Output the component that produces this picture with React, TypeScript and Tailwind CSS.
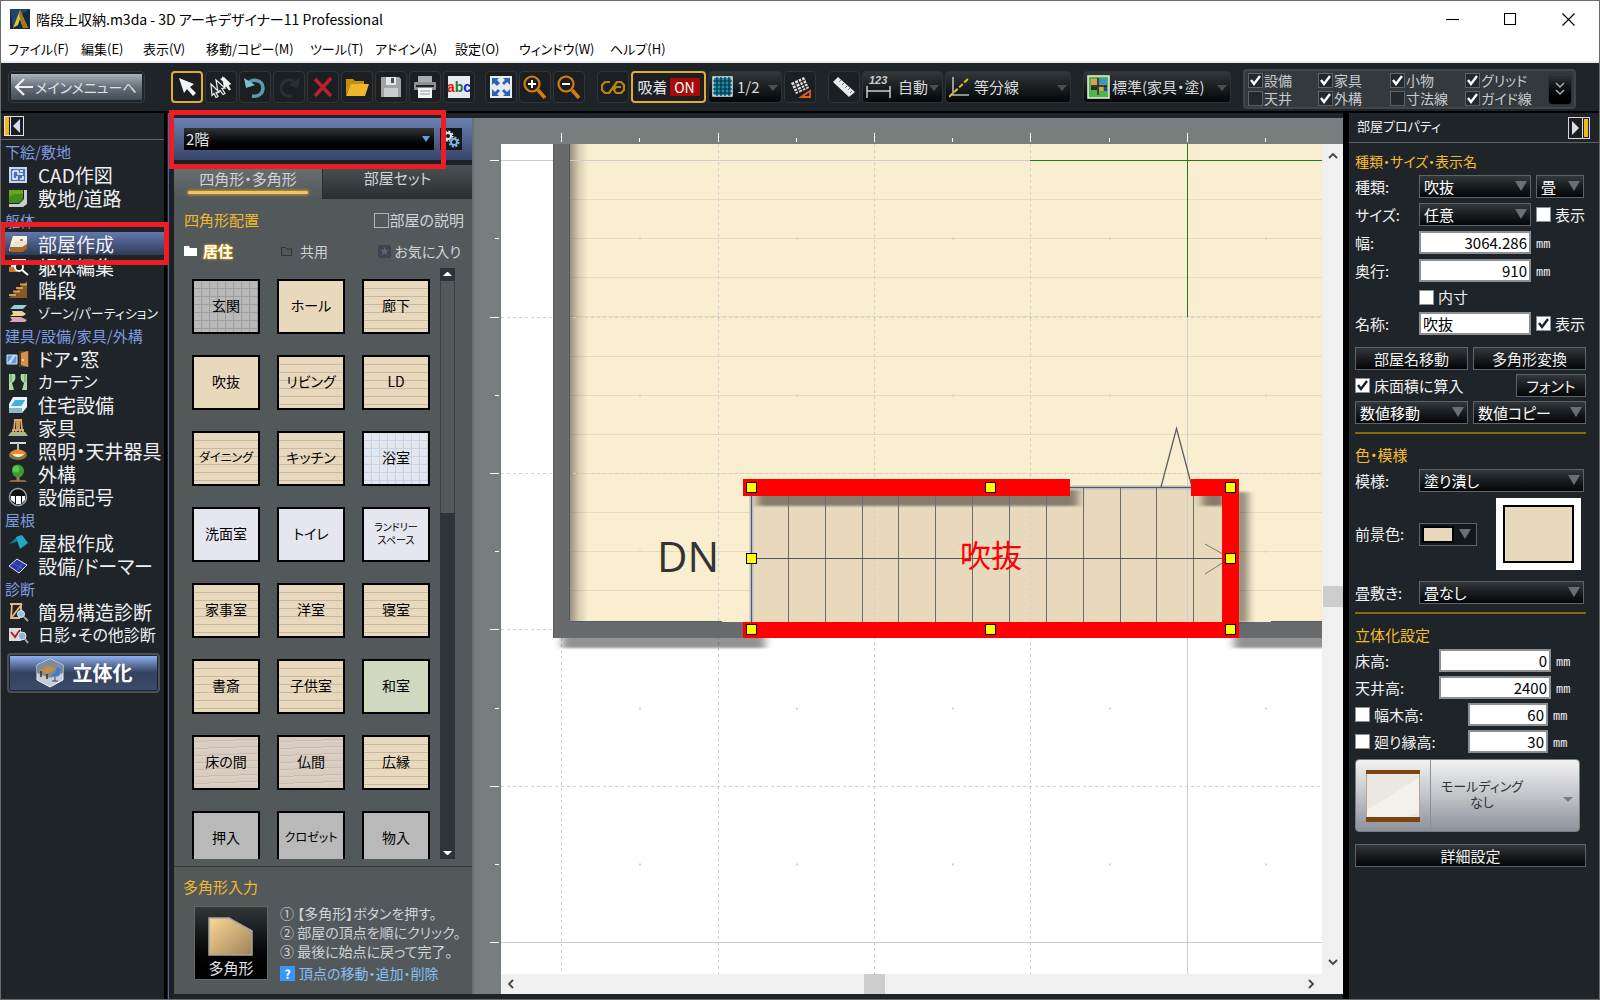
import React from "react";

type Room = { name: string; style: string; small?: boolean };

const PLAIN = "bg-[#e8d8bc]";
const WOOD =
  "bg-[repeating-linear-gradient(#e8d8bc_0_7px,#c6b8a4_7px_8px)]";
const GRAIN =
  "bg-[repeating-linear-gradient(178deg,#d8ccc0_0_4px,#c9bcae_4px_5px,#dccfc6_5px_7px)]";
const TILE_GRAY =
  "bg-[repeating-linear-gradient(90deg,transparent_0_7px,#9d9d9d_7px_8px),repeating-linear-gradient(#b9b9b9_0_7px,#9d9d9d_7px_8px)]";
const TILE_BLUE =
  "bg-[repeating-linear-gradient(90deg,transparent_0_7px,#c3d5e4_7px_8px),repeating-linear-gradient(#e6e6f0_0_7px,#c3d5e4_7px_8px)]";
const WHITE = "bg-[#e6e6f0]";
const GREEN = "bg-[#d0d8c0]";
const GRAY = "bg-[#b9b9b9]";

const rooms: Room[] = [
  { name: "玄関", style: TILE_GRAY },
  { name: "ホール", style: PLAIN },
  { name: "廊下", style: WOOD },
  { name: "吹抜", style: PLAIN },
  { name: "リビング", style: WOOD },
  { name: "LD", style: WOOD },
  { name: "ダイニング", style: WOOD },
  { name: "キッチン", style: WOOD },
  { name: "浴室", style: TILE_BLUE },
  { name: "洗面室", style: WHITE },
  { name: "トイレ", style: WHITE },
  { name: "ランドリー\nスペース", style: WHITE, small: true },
  { name: "家事室", style: WOOD },
  { name: "洋室", style: WOOD },
  { name: "寝室", style: WOOD },
  { name: "書斎", style: WOOD },
  { name: "子供室", style: WOOD },
  { name: "和室", style: GREEN },
  { name: "床の間", style: GRAIN },
  { name: "仏間", style: GRAIN },
  { name: "広縁", style: WOOD },
  { name: "押入", style: GRAY },
  { name: "クロゼット", style: GRAY },
  { name: "物入", style: GRAY },
];

const menus = [
  "ファイル(F)",
  "編集(E)",
  "表示(V)",
  "移動/コピー(M)",
  "ツール(T)",
  "アドイン(A)",
  "設定(O)",
  "ウィンドウ(W)",
  "ヘルプ(H)",
];

const sideIcons: Record<string, React.ReactNode> = {
  cad: (
    <>
      <rect x="1" y="2" width="18" height="16" fill="#c9d8f2" />
      <rect x="3" y="4" width="14" height="12" fill="#4a6fb8" />
      <path d="M5 6h5v3h5M5 6v8h4v-3M12 14h3v-3M12 6h3" fill="none" stroke="#fff" strokeWidth="1.4" />
    </>
  ),
  site: (
    <>
      <path d="M1 2h14v9l-4 4H1z" fill="#3f8f14" />
      <path d="M1 2h14v4H6L1 9z" fill="#6aa51f" />
      <path d="M16 2h3v14l-4 3H1v-3h10l5-5z" fill="#c9ccce" />
    </>
  ),
  room: (
    <>
      <path d="M5 2h14v12l-4 3H1l2-9z" fill="#efe4d2" />
      <path d="M5 2h14v5H8L3 11z" fill="#f8f1e4" />
      <path d="M2 13h12l5-3v4l-4 4H2z" fill="#a5672a" />
      <rect x="12" y="5" width="3" height="2" fill="#8a8f94" />
    </>
  ),
  body: (
    <>
      <path d="M4 2h14v6H9l-7 6z" fill="#efe4d2" />
      <path d="M1 10h8v5H1z" fill="#c9782a" />
      <circle cx="11" cy="10" r="4" fill="#222" stroke="#fff" strokeWidth="1.8" />
      <path d="M14 13l6 5" stroke="#fff" strokeWidth="2" />
    </>
  ),
  stairs: (
    <>
      <path d="M1 18L19 1v17z" fill="#8a5826" />
      <path d="M1 15h7M5 11.500h7M8 8h7M12 4.500h7" stroke="#d59a52" strokeWidth="1.800" />
    </>
  ),
  zone: (
    <>
      <path d="M6 2h13l-4 4H2z" fill="#8fd0d2" />
      <path d="M4 8h10l4 3-3 2H2l3-2z" fill="#e9d59a" />
      <path d="M2 14h11l6 3-2 2H1l3-2z" fill="#d9a3b4" />
    </>
  ),
  door: (
    <>
      <path d="M-1 6h10v9H-1z" fill="#5f9be0" stroke="#d9e8f8" />
      <path d="M0 14l5-8h3L3 14z" fill="#c4defa" />
      <rect x="11" y="2" width="10" height="16" fill="#5b3a1c" />
      <path d="M13 4l7-2v16l-7-2z" fill="#d8914c" />
      <circle cx="15" cy="11" r="1" fill="#fff" />
    </>
  ),
  curtain: (
    <>
      <path d="M1 2h6c1 5 0 7-3 9l2 7H1z" fill="#a7d9a0" />
      <path d="M19 2h-6c-1 5 0 7 3 9l-2 7h5z" fill="#a7d9a0" />
      <path d="M3 2v8M17 2v8" stroke="#5d9a5a" />
    </>
  ),
  bath: (
    <>
      <path d="M5 2h14v10l-5 6H1V9z" fill="#e9f3f8" />
      <path d="M7 5h11l-4 6H3z" fill="#3db3dc" />
      <path d="M1 13h13v5H1z" fill="#8db7cc" />
      <path d="M14 11l5-8" stroke="#fff" />
    </>
  ),
  chair: (
    <>
      <path d="M3 14h14l3 4H0z" fill="#9fb89a" />
      <path d="M6 2h8M7 2L6 11M13 2l1 9M9 3v8M11 3v8M4 12h12M5 12v5M15 12v5M8 12v3M12 12v3" fill="none" stroke="#dba562" strokeWidth="1.800" />
    </>
  ),
  light: (
    <>
      <path d="M2 2h16" stroke="#d8d8d8" strokeWidth="2" />
      <path d="M10 2v7" stroke="#bbb" strokeWidth="2" />
      <ellipse cx="10" cy="14" rx="9" ry="5" fill="#f7c14d" opacity=".5" />
      <path d="M2 13c2-6 14-6 16 0z" fill="#e98b3b" />
      <path d="M4 13h12c-2 4-10 4-12 0z" fill="#fff1b8" />
    </>
  ),
  tree: (
    <>
      <path d="M3 16h14l2 2H1z" fill="#8a6b4a" />
      <path d="M10 17V9" stroke="#b47a3e" strokeWidth="3" />
      <ellipse cx="10" cy="7" rx="6" ry="6.500" fill="#3f9b31" />
      <circle cx="8" cy="5" r="3.500" fill="#5fc24a" />
    </>
  ),
  symbol: (
    <>
      <circle cx="10" cy="10" r="8.500" fill="#111" stroke="#9da1a4" strokeWidth="1.500" />
      <path d="M3 9h14v4l-3 3V9h-1v8H8V9H7v7l-4-3z" fill="#fff" />
    </>
  ),
  roof: (
    <>
      <path d="M1 11l8-7 5-2-6 7z" fill="#0f7f95" />
      <path d="M8 4l6-2 6 8-8 6z" fill="#21a9c4" />
    </>
  ),
  solar: (
    <>
      <path d="M1 10l8-7 10 6-8 8z" fill="#2f38a0" stroke="#dfe4ff" />
      <path d="M5 7l10 6M9 14l6-7" stroke="#6a74d8" strokeWidth=".6" />
    </>
  ),
  structure: (
    <>
      <path d="M2 2h12M4 2l-1 14h9M14 2L4 15M13 3v7" fill="none" stroke="#e2bb7c" strokeWidth="1.8" />
      <circle cx="13" cy="12" r="3.500" fill="#8fc1e8" stroke="#dfeefa" />
      <path d="M16 15l4 4" stroke="#9aa" strokeWidth="2" />
    </>
  ),
  shadow: (
    <>
      <rect x="1" y="3" width="12" height="13" fill="#ddd" />
      <path d="M3 7l4 5 5-7" fill="none" stroke="#b5202b" strokeWidth="2" />
      <circle cx="14" cy="11" r="4" fill="#8fb7dc" stroke="#dfeefa" />
      <path d="M17 14l3 4" stroke="#9aa" strokeWidth="2" />
    </>
  ),
};

type SideRow = { label: string; icon?: string; active?: boolean; size?: string };

const sideRows: SideRow[] = [
  { label: "下絵/敷地" },
  { label: "CAD作図", icon: "cad" },
  { label: "敷地/道路", icon: "site" },
  { label: "躯体" },
  { label: "部屋作成", icon: "room", active: true },
  { label: "躯体編集", icon: "body" },
  { label: "階段", icon: "stairs" },
  { label: "ゾーン/パーティション", icon: "zone", size: "text-[13px]" },
  { label: "建具/設備/家具/外構" },
  { label: "ドア・窓", icon: "door" },
  { label: "カーテン", icon: "curtain", size: "text-base" },
  { label: "住宅設備", icon: "bath" },
  { label: "家具", icon: "chair" },
  { label: "照明・天井器具", icon: "light" },
  { label: "外構", icon: "tree" },
  { label: "設備記号", icon: "symbol" },
  { label: "屋根" },
  { label: "屋根作成", icon: "roof" },
  { label: "設備/ドーマー", icon: "solar" },
  { label: "診断" },
  { label: "簡易構造診断", icon: "structure" },
  { label: "日影・その他診断", icon: "shadow", size: "text-base" },
];

const TOOL =
  "flex h-8 shrink-0 items-center justify-center rounded-sm border border-[#2f3539] bg-[#1b1f22]";
const DROP =
  "h-8 w-full appearance-none rounded-sm border border-[#2c3134] bg-linear-to-b from-[#33383b] to-[#060708] text-[15px] text-[#d6d9db]";

const Tool = ({ label, active, children }: { label: string; active?: boolean; children: React.ReactNode }) => (
  <button aria-label={label} className={`${TOOL} w-8 ${active ? "border-2 !border-[#e0ac34]" : ""}`}>
    <svg width="24" height="24" viewBox="0 0 24 24" fill="none">
      {children}
    </svg>
  </button>
);

const ToolSelect = ({ label, value, width, pad, children }: { label: string; value: string; width: string; pad: string; children: React.ReactNode }) => (
  <div className={`relative shrink-0 ${width}`}>
    <select aria-label={label} className={`${DROP} ${pad}`}>
      <option>{value}</option>
    </select>
    <svg className="pointer-events-none absolute top-1 left-1" width="28" height="24" viewBox="0 0 28 24" fill="none">
      {children}
    </svg>
    <svg className="pointer-events-none absolute top-3.5 right-1" width="10" height="6">
      <path d="M0 0h10L5 6z" fill="#4a4f53" />
    </svg>
  </div>
);

const Check = ({ label, checked, dark }: { label: string; checked?: boolean; dark?: boolean }) => (
  <label className="flex items-center gap-1 whitespace-nowrap">
    <span className="relative block size-[15px]">
      <input
        type="checkbox"
        defaultChecked={checked}
        className={`peer block size-[15px] appearance-none border ${dark ? "border-[#5d6367] bg-[#23282c]" : "border-[#8c9093] bg-white"}`}
      />
      <svg className="pointer-events-none absolute top-0 left-0 hidden peer-checked:block" width="15" height="15">
        <path d="M3 7l3 4 6-8" fill="none" stroke={dark ? "#fff" : "#14202c"} strokeWidth="2.400" />
      </svg>
    </span>
    {label}
  </label>
);

const PropSelect = ({ id, value, width }: { id: string; value: string; width: string }) => (
  <div className={`relative ${width}`}>
    <select
      id={id}
      aria-label={id}
      className="block h-[23px] w-full appearance-none border border-[#5d6367] bg-linear-to-b from-[#33383b] to-[#050607] pl-1 text-[15px] leading-[20px] text-white"
    >
      <option>{value}</option>
    </select>
    <svg className="pointer-events-none absolute top-1.5 right-1" width="12" height="10">
      <path d="M0 0h12L6 10z" fill="#6a6f73" />
    </svg>
  </div>
);

const PropInput = ({ id, value, width, left }: { id: string; value: string; width: string; left?: boolean }) => (
  <input
    id={id}
    defaultValue={value}
    className={`block h-[23px] border-2 border-[#8c9093] bg-white px-0.5 text-[15px] leading-[19px] text-black ${width} ${left ? "" : "text-right"}`}
  />
);

const PROP_BUTTON =
  "h-[23px] border border-[#5d6367] bg-linear-to-b from-[#33383b] to-[#050607] text-[15px] leading-[20px]";

const Unit = () => <span className="pt-1 font-['Liberation_Mono'] text-xs">mm</span>;

const GoldLine = () => <div className="h-[2px] bg-[#8a6a08]" />;

const TitleBar = () => (
  <header className="bg-white text-black">
    <div className="flex h-9 items-center pl-[9px]">
      <svg width="20" height="20" viewBox="0 0 20 20">
        <rect width="20" height="20" fill="#16283f" />
        <path d="M0 0h20L9 7 3 18z" fill="#1f456e" />
        <path d="M10 1l8 18h-5l-3-9-2 6-5 3z" fill="#e2bf45" />
        <path d="M10 1l8 18h-5L9 6z" fill="#a17a16" />
      </svg>
      <h1 className="ml-1.5 flex-1 text-sm">階段上収納.m3da - 3D アーキデザイナー11 Professional</h1>
      <div className="flex gap-[10px] pr-[7px]">
        {[
          { name: "最小化", d: "M0 6.500h13" },
          { name: "最大化", d: "M.5 .5h11v11H.5z" },
          { name: "閉じる", d: "M.5 .5l12 12M12.500 .5l-12 12" },
        ].map((b) => (
          <button key={b.name} aria-label={b.name} className="flex h-7 w-12 items-center justify-center">
            <svg width="13" height="13">
              <path d={b.d} fill="none" stroke="#000" strokeWidth="1.100" />
            </svg>
          </button>
        ))}
      </div>
    </div>
    <nav className="grid h-[26px] grid-cols-[73px_62px_63px_104px_65px_80px_64px_91px_80px] items-center border-b-2 border-[#ececf2] pl-[7px] text-[13px]">
      {menus.map((m) => (
        <button key={m} className="text-left whitespace-nowrap">
          {m}
        </button>
      ))}
    </nav>
  </header>
);

const ToolBar = () => (
  <div className="flex h-[50px] shrink-0 items-start gap-0.5 border-b-2 border-black bg-[#1f2428] pt-2 pl-[7px]">
    <div className="mr-6 h-8 w-[137px] shrink-0 rounded border border-[#33393d] p-0.5">
      <button className="flex h-full w-full items-center bg-linear-to-b from-[#a9b3bd] via-[#66707a] to-[#434b54] px-0.5 text-sm whitespace-nowrap text-[#dfe3e6]">
        <svg width="22" height="20" viewBox="0 0 22 20" className="shrink-0">
          <path d="M20 10H3M11 2l-8 8 8 8" fill="none" stroke="#eef1f3" strokeWidth="2.200" />
        </svg>
        メインメニューへ
      </button>
    </div>
    <Tool label="選択" active>
      <path d="M4 3l5 15 3-4 6 7 3-3-6-6 4-3z" fill="#f4f4f4" />
    </Tool>
    <Tool label="複数選択">
      <path d="M13 1l9 8-3 .5 3 5-2 1-3-4-2 2z" fill="#f2f2f2" />
      <path d="M7 5l9 8-3 .5 3 5-2 1-3-4-2 2z" fill="#24282b" stroke="#eee" strokeWidth="1.200" />
      <path d="M2 9l8 8-3 .5 2 4-2 1-2-4-2 2z" fill="#24282b" stroke="#eee" strokeWidth="1.200" />
      <path d="M15 2l-4 2 8 7 3-2z" fill="#f2f2f2" />
    </Tool>
    <Tool label="元に戻す">
      <path d="M4 10c4-7 16-6 16 3 0 6-5 9-11 8" stroke="#5b9bb0" strokeWidth="3.500" />
      <path d="M1 3l2 10 9-3z" fill="#7cc0d4" />
    </Tool>
    <Tool label="やり直し">
      <path d="M20 10C16 3 4 4 4 13c0 6 5 9 11 8" stroke="#2a2f33" strokeWidth="3" />
      <path d="M23 3l-2 10-9-3z" fill="#2a2f33" />
    </Tool>
    <Tool label="削除">
      <path d="M4 4l16 17M20 3L4 21" stroke="#bb202c" strokeWidth="3.500" />
    </Tool>
    <Tool label="開く">
      <path d="M1 20V4h7l2 2h9v4H6z" fill="#c78f0f" />
      <path d="M1 21L6 9h18l-4 12z" fill="#f0b72c" />
    </Tool>
    <Tool label="保存">
      <path d="M2 2h18l2 2v18H2z" fill="#9fa3a6" />
      <rect x="7" y="2" width="10" height="8" fill="#e4e6e8" />
      <rect x="12" y="3" width="3" height="5" fill="#4a4f53" />
      <rect x="5" y="13" width="14" height="9" fill="#c9ccce" />
    </Tool>
    <Tool label="印刷">
      <rect x="5" y="1" width="14" height="6" fill="#a9adb0" />
      <rect x="1" y="7" width="22" height="8" rx="1" fill="#8d9194" />
      <path d="M3 11h18" stroke="#222" strokeWidth="2" />
      <rect x="5" y="13" width="14" height="10" fill="#f2f2f2" />
      <path d="M7 16h10M7 19h10" stroke="#999" />
    </Tool>
    <Tool label="文字">
      <rect x="1" y="1" width="22" height="22" fill="#e6e9ee" />
      <text x="0" y="17" fontSize="14" fontWeight="bold" fontFamily="Liberation Sans" fill="#e01414">
        a<tspan fill="#1d7a2b">b</tspan>
        <tspan fill="#1c1cd0">c</tspan>
      </text>
    </Tool>
    <div className="w-1.5" />
    <Tool label="全体表示">
      <rect x="1" y="1" width="22" height="22" fill="#e8ecf2" />
      <path d="M3 3h7L8 5l3 3-3 3-3-3-2 2zM21 3h-7l2 2-3 3 2 2 3-3 3 3zM3 21h7l-2-2 3-3-2-2-3 3-3-3zM21 21h-7l2-2-3-3 2-2 3 3 3-3z" fill="#2b62b5" />
    </Tool>
    <Tool label="拡大">
      <circle cx="9" cy="9" r="7.500" stroke="#d57c12" strokeWidth="2.200" />
      <path d="M15 15l7 8" stroke="#d57c12" strokeWidth="3.500" />
      <path d="M5 9h8M9 5v8" stroke="#fff" strokeWidth="2" />
    </Tool>
    <Tool label="縮小">
      <circle cx="9" cy="9" r="7.500" stroke="#d57c12" strokeWidth="2.200" />
      <path d="M15 15l7 8" stroke="#d57c12" strokeWidth="3.500" />
      <path d="M5 9h8" stroke="#fff" strokeWidth="2" />
    </Tool>
    <div className="w-2" />
    <Tool label="連続">
      <path d="M9 7H4L1 10v5l3 3h4l8-11h4l3 3v5l-3 3h-5l-2-3 2-3h5" stroke="#b8860f" strokeWidth="2.200" strokeLinejoin="round" />
    </Tool>
    <button className={`${TOOL} w-[75px] gap-0.5 border-2 !border-[#e0ac34] text-[15px] text-[#e4e6e8]`}>
      吸着
      <span className="flex h-[18px] w-[30px] items-center justify-center bg-[#a80a0a] text-sm text-white">ON</span>
    </button>
    <ToolSelect label="グリッド間隔" value="1/2" width="w-[74px]" pad="pl-7">
      <rect x="1" y="2" width="19" height="19" fill="#1593b5" stroke="#dfe3e6" strokeWidth="1.500" />
      <path d="M5 2v19M9 2v19M13 2v19M17 2v19M1 6h19M1 10h19M1 14h19M1 18h19" stroke="#0b2a36" strokeWidth="1.200" />
    </ToolSelect>
    <Tool label="グリッド設定">
      <path d="M3 8l13-6 5 11-13 6z" fill="#e4e4e4" />
      <path d="M4 11l13-6M6 14l13-6M7 17l13-6M6 6l5 12M10 5l5 11M13 3l5 11" stroke="#222" strokeWidth="1.200" />
      <path d="M22 16v6h-9z" fill="#1b1f22" stroke="#e0601c" strokeWidth="1.800" />
    </Tool>
    <div className="w-2" />
    <Tool label="メジャー">
      <path d="M6 2L1 7l16 15 6-5z" fill="#e9eaeb" />
      <path d="M9 5l-2 2M12 8l-2 2M15 11l-2 2M18 13l-2 2M20 16l-2 2" stroke="#777" />
    </Tool>
    <ToolSelect label="寸法" value="自動" width="w-[81px]" pad="pl-[35px]">
      <text x="3" y="9" fontSize="11" fontWeight="bold" fontStyle="italic" fontFamily="Liberation Sans" fill="#c9ccce">
        123
      </text>
      <path d="M1 11v12M24 11v12M1 16h23" stroke="#c9ccce" strokeWidth="1.500" />
    </ToolSelect>
    <ToolSelect label="補助線" value="等分線" width="w-[126px]" pad="pl-[28px]">
      <path d="M4 2v18h16" stroke="#b7babc" strokeWidth="1.600" />
      <path d="M0 22L20 3" stroke="#e2bf2c" strokeWidth="2" strokeDasharray="5 2" />
    </ToolSelect>
    <div className="w-2" />
    <ToolSelect label="表示モード" value="標準(家具・塗)" width="w-[148px]" pad="pl-[28px]">
      <rect x="1" y="1" width="21" height="22" fill="#4fb54a" stroke="#f0f0e0" strokeWidth="1.500" />
      <path d="M4 4h6v6H4z" fill="#e59a4d" />
      <path d="M12 4h8v5h-8z" fill="#3f8fd8" />
      <path d="M4 12h6v3H4z" fill="#222d33" />
      <path d="M12 11h4v5h-4z" fill="#e59a4d" />
      <path d="M17 11h3v5h-3z" fill="#2b3f9b" />
      <path d="M4 11h16M11 3v17" stroke="#222" strokeWidth="1.400" />
    </ToolSelect>
    <div className="-mt-0.5 ml-2.5 flex h-10 w-[333px] items-center rounded-sm border-2 border-[#3f4548] bg-[#33393c] pl-[3px] text-sm text-[#c8cbce]">
      <div className="grid flex-1 grid-cols-[70px_72px_75px_78px] [&_label]:h-[18px] [&_label]:gap-px">
        <Check dark checked label="設備" />
        <Check dark checked label="家具" />
        <Check dark checked label="小物" />
        <Check dark checked label="グリッド" />
        <Check dark label="天井" />
        <Check dark checked label="外構" />
        <Check dark label="寸法線" />
        <Check dark checked label="ガイド線" />
      </div>
      <button aria-label="その他" className="mr-0.5 flex h-8 w-6 items-center justify-center rounded-sm border border-[#2c3134] bg-linear-to-b from-[#33383b] to-black">
        <svg width="10" height="14" viewBox="0 0 10 14">
          <path d="M1 1l4 4 4-4M1 8l4 4 4-4" fill="none" stroke="#a9adb0" strokeWidth="1.500" />
        </svg>
      </button>
    </div>
  </div>
);

const SideBar = () => (
  <aside className="flex w-[173px] shrink-0 border-r-[5px] border-[#1c2125] bg-[#1f2428]">
    <div className="min-w-0 flex-1 pt-[3px]">
      <div className="border-b border-[#5d6367] pb-[3px] pl-[3px]">
        <button aria-label="閉じる" className="block">
          <svg width="20" height="20">
            <rect x=".5" y=".5" width="19" height="19" fill="#1b1f22" stroke="#e4e4e8" />
            <rect x="1" y="1" width="4" height="18" fill="#f4b818" />
            <path d="M6.500 1v18" stroke="#e4e4e8" />
            <path d="M16 3v14l-7-7z" fill="#d8dcee" />
          </svg>
        </button>
      </div>
      <ul>
        {sideRows.map((row) =>
          row.icon ? (
            <li key={row.label} className="relative">
              <a
                href="#"
                className={`ml-1 flex h-[23px] items-center gap-2.5 pl-[3px] leading-[23px] whitespace-nowrap text-[#eef0f2] ${
                  row.size ?? "text-[19px]"
                } ${row.active ? "bg-linear-to-b from-[#6478ae] to-[#2f3b58]" : ""}`}
              >
                <svg width="20" height="20" viewBox="0 0 20 20" overflow="visible" className="shrink-0">
                  {sideIcons[row.icon]}
                </svg>
                {row.label}
              </a>
              {row.active && (
                <div className="pointer-events-none absolute -top-2.5 -left-px z-10 h-[43px] w-[169px] border-[5px] border-[#ee1c25]" />
              )}
            </li>
          ) : (
            <li key={row.label} className="h-[23px] pl-1 text-[15px] leading-[23px] whitespace-nowrap text-[#7f9be0]">
              {row.label}
            </li>
          )
        )}
      </ul>
      <div className="mt-[7px] mr-1 ml-1.5 rounded border-2 border-[#4a5054] p-px">
        <button className="flex h-[34px] w-full items-center justify-center gap-2 bg-linear-to-b from-[#8fb0f0] via-[#34415f] to-[#3c4a6c] text-xl font-bold text-white">
          <svg width="30" height="30" viewBox="0 0 30 30">
            <path d="M15 1l13 6v15l-13 7-13-7V7z" fill="#c4ccd4" stroke="#eef2f5" />
            <path d="M15 1l13 6v8L15 20 2 15V7z" fill="#7f8c97" />
            <path d="M5 12l9-4 7 3-9 5z" fill="#c98b46" />
            <path d="M6 13v6M12 16v5" stroke="#3c2a1a" strokeWidth="1.500" />
            <path d="M22 9l4 2-2 7-5 1-3-2 4-2z" fill="#3f7fc4" />
            <path d="M20 19v4M17 23h6" stroke="#2c4a6a" />
          </svg>
          立体化
        </button>
      </div>
    </div>
    <div className="w-[3px] bg-black" />
    <div className="w-px bg-[#1c2125]" />
    <div className="w-px bg-[#4a66a0]" />
  </aside>
);

const RoomPanel = () => (
  <section className="flex w-[300px] shrink-0 flex-col border-r-2 border-[#6a6f72] bg-[#53585b] text-[15px] text-[#cfd3d6]">
    <div className="relative flex h-[47px] shrink-0 items-start gap-1.5 border-b-[5px] border-[#1c2125] bg-linear-to-b from-[#6b80b2] to-[#38456a] pt-2.5 pl-2.5">
      <div className="relative w-[250px]">
        <select aria-label="階" className="block h-[22px] w-full appearance-none bg-linear-to-b from-[#33363a] to-black pl-0.5 text-[15px] leading-[20px] text-[#e0e3e6]">
          <option>2階</option>
        </select>
        <svg className="pointer-events-none absolute top-2 right-1" width="8" height="6">
          <path d="M0 0h8L4 6z" fill="#6a9ae0" />
        </svg>
      </div>
      <button aria-label="階の設定" className="h-[22px] w-[22px] bg-[#15181a]">
        <svg width="22" height="22" fill="none">
          <circle cx="8" cy="8" r="4.500" stroke="#e4e6e8" strokeWidth="2" strokeDasharray="2 1.500" />
          <circle cx="8" cy="8" r="3" stroke="#e4e6e8" strokeWidth="2" />
          <circle cx="14" cy="14" r="4.500" fill="#15181a" stroke="#7fb2e0" strokeWidth="2" strokeDasharray="2 1.500" />
          <circle cx="14" cy="14" r="3" stroke="#7fb2e0" strokeWidth="2" />
        </svg>
      </button>
      <div className="pointer-events-none absolute -top-2 -left-[5px] z-10 h-[59px] w-[277px] border-[5px] border-[#ee1c25]" />
    </div>
    <div className="flex h-[34px] shrink-0">
      <button className="flex w-[148px] flex-col items-center bg-linear-to-b from-[#6b7073] to-[#53585b] pt-[3px] leading-[21px]">
        四角形・多角形
        <span className="mt-0.5 h-[3px] w-[120px] rounded-full bg-[#efc766] shadow-[0_0_3px_1px_#c98f1c]" />
      </button>
      <button className="flex-1 border-b border-l border-[#2a2f32] bg-linear-to-b from-[#4c5154] to-[#2a2f32] pb-1.5">部屋セット</button>
    </div>
    <div className="mt-2.5 flex h-[22px] shrink-0 items-center justify-between pr-2 pl-2.5">
      <h2 className="text-[#f0b92c]">四角形配置</h2>
      <label className="flex items-center gap-px">
        <input type="checkbox" className="size-[15px] appearance-none border border-[#b0b3b5]" />
        部屋の説明
      </label>
    </div>
    <div className="mt-[10px] flex h-5 shrink-0 items-center text-sm">
      <button className="flex w-24 items-center gap-1.5 pl-2.5 text-[15px] font-bold text-white [text-shadow:0_0_3px_#e8a800,0_0_2px_#e8a800]">
        <svg width="13" height="10">
          <path d="M0 0h5l1 2h7v8H0z" fill="#fff" />
        </svg>
        居住
      </button>
      <button className="flex flex-1 items-center gap-2 pl-[11px]">
        <svg width="11" height="9">
          <path d="M.5 .5h4l1 1.500h5v6.500H.5z" fill="none" stroke="#2f3437" />
        </svg>
        共用
      </button>
      <button className="flex items-center gap-[3px] pr-[11px]">
        <svg width="13" height="13">
          <rect width="13" height="13" rx="2" fill="#3e4450" />
          <path d="M6.500 2l1.300 3h3L8.500 7l1 3.500-3-2-3 2 1-3.500L2.200 5h3z" fill="#5d6470" />
        </svg>
        お気に入り
      </button>
    </div>
    <div className="mt-[7px] flex min-h-0 flex-1">
      <div className="grid w-[266px] shrink-0 grid-cols-[68px_68px_68px] content-start gap-x-[17px] gap-y-[21px] overflow-hidden pt-[11px] pl-[18px] text-black">
        {rooms.map((room) => (
          <button
            key={room.name}
            className={`h-[55px] border-2 border-black pb-1 whitespace-pre ${room.style} ${
              room.small ? "text-[10px] leading-[13px]" : room.name.length > 4 ? "text-xs" : "text-sm"
            }`}
          >
            {room.name}
          </button>
        ))}
      </div>
      <div className="flex w-[15px] flex-col items-center bg-[#2f3337]">
        <svg width="15" height="13">
          <path d="M3 8l4-4h1l4 4z" fill="#fff" />
        </svg>
        <div className="h-[232px] w-full border-x border-[#3a3f42] bg-[#53585b]" />
        <svg width="15" height="13" className="mt-auto">
          <path d="M3 5h9l-4 4H7z" fill="#fff" />
        </svg>
      </div>
    </div>
    <div className="mt-[7px] h-32 shrink-0 border-t border-[#34393c] pt-[9px] pl-[9px]">
      <h2 className="leading-[22px] text-[#f0b92c]">多角形入力</h2>
      <div className="mt-1.5 flex gap-3">
        <button className="mt-0.5 ml-[11px] flex h-[74px] w-[74px] flex-col items-center justify-end border border-[#62676a] bg-linear-to-b from-[#33383b] to-black leading-[22px] text-[#e0e3e6]">
          <svg width="46" height="40" viewBox="0 0 46 40">
            <defs>
              <linearGradient id="poly" x2="1" y2="1">
                <stop stopColor="#fbd898" />
                <stop offset="1" stopColor="#a08258" />
              </linearGradient>
            </defs>
            <path d="M1 1h20l23 13v24H1z" fill="url(#poly)" stroke="#a8a49c" strokeWidth="1.500" />
          </svg>
          多角形
        </button>
        <div className="text-sm leading-[19px] whitespace-nowrap">
          <ol>
            <li>① 【多角形】ボタンを押す。</li>
            <li>② 部屋の頂点を順にクリック。</li>
            <li>③ 最後に始点に戻って完了。</li>
          </ol>
          <a href="#" className="mt-[3px] flex items-center gap-1 text-[#86c0f4]">
            <span className="flex size-[15px] items-center justify-center bg-[#3a97fa] text-xs font-bold text-white">?</span>
            頂点の移動・追加・削除
          </a>
        </div>
      </div>
    </div>
  </section>
);

const majorX = [561.5, 718.5, 874.5, 1030.5, 1187.5];
const minorX = [639.5, 796.5, 952.5, 1109.5, 1265.5];
const majorY = [160.5, 317.5, 473.5, 629.5, 786.5, 942.5];
const minorY = [238.5, 395.5, 551.5, 708.5, 864.5];
const boards = [199.5, 238.5, 277.5, 316.5, 356.5, 395.5, 434.5, 473.5, 512.5, 551.5, 590.5];
const treads = [788.5, 825.5, 862.5, 898.5, 935.5, 972.5, 1009.5, 1046.5, 1083.5, 1120.5, 1156.5, 1193.5];
const handles = [
  [751, 487],
  [990, 487],
  [1230, 487],
  [751, 558],
  [1230, 558],
  [751, 629],
  [990, 629],
  [1230, 629],
];

const FloorPlan = () => (
  <svg viewBox="474 118 848 856" preserveAspectRatio="xMinYMin slice" className="block h-full min-w-0 flex-1">
    <defs>
      <linearGradient id="wallShade">
        <stop stopColor="#3a3526" stopOpacity=".5" />
        <stop offset=".5" stopColor="#3a3526" stopOpacity=".18" />
        <stop offset="1" stopColor="#3a3526" stopOpacity="0" />
      </linearGradient>
      <filter id="soft" x="-20%" y="-60%" width="140%" height="220%">
        <feGaussianBlur stdDeviation="4 1" />
      </filter>
      <clipPath id="sheet">
        <rect x="501" y="144" width="821" height="830" />
      </clipPath>
    </defs>
    {/* rulers */}
    <rect x="474" y="118" width="848" height="856" fill="#787d80" />
    <path d={majorX.map((x) => `M${x} 133v9`).join("") + minorX.map((x) => `M${x} 138v4`).join("")} stroke="#fff" />
    <path d={majorY.map((y) => `M490 ${y}h9`).join("") + minorY.map((y) => `M495 ${y}h4`).join("")} stroke="#fff" />
    <g clipPath="url(#sheet)">
      <rect x="501" y="144" width="821" height="830" fill="#fff" />
      <rect x="570" y="144" width="752" height="478" fill="#faeed0" />
      <path d={boards.map((y) => `M570 ${y}H1322`).join("")} stroke="#e8dbba" />
      <rect x="570" y="144" width="18" height="477" fill="url(#wallShade)" />
      {/* room floor */}
      <rect x="751" y="487" width="479" height="138" fill="#e8d8bc" />
      {/* grid */}
      <path d="M718.500 144V974M874.500 144V974M1030.500 144V974M561.500 638V974" stroke="#cfd0d4" strokeDasharray="3 3" />
      <path d="M501 317.500H1322M501 473.500H1322M501 629.500H553M501 786.500H1322" stroke="#cfd0d4" strokeDasharray="3 3" />
      <path d="M501 160.500H1322M501 942.500H1322M1187.500 144V974" stroke="#cdcdcf" />
      {minorX.map((x) => minorY.map((y) => <rect key={`${x}-${y}`} x={x - 0.5} y={y - 1} width="2" height="2" fill="#cfd3da" />))}
      <path d="M1030 160.500H1322M1187.500 144V317" stroke="#1f7a1f" />
      {/* walls */}
      <g fill="#000" opacity=".42" filter="url(#soft)">
        <rect x="562" y="634" width="203" height="14" />
        <rect x="1234" y="634" width="110" height="14" />
      </g>
      <path d="M553 144h17v477h152v1h30v16H553z" fill="#696a6c" />
      <path d="M553.500 144v494M569.500 144v477.500H722" fill="none" stroke="#575b61" />
      <rect x="1238" y="622" width="84" height="16" fill="#696a6c" />
      <path d="M1271 621.500h51" stroke="#575b61" />
      {/* stairs */}
      <g fill="#000" opacity=".42" filter="url(#soft)">
        <rect x="757" y="490" width="321" height="16" />
        <rect x="1202" y="490" width="24" height="16" />
        <rect x="1234" y="492" width="14" height="130" />
      </g>
      <path d="M751.500 487v135M1070 487.500h121" stroke="#b9bcc2" strokeWidth="4" />
      <path d={treads.map((x) => `M${x} 487V622`).join("")} stroke="#6a6d70" />
      <path d="M751.500 487v135M751 558.500H1230M1070 487.500h121" stroke="#55595f" />
      <path d="M1205 544l25 14-25 16" fill="none" stroke="#77777a" />
      <path d="M1161 487l15.500-58.500 15.500 58.500" fill="none" stroke="#5a5f66" strokeWidth="1.300" />
      <path d="M743 479h327v17H743zM1191 479h48v159H743v-16h479V496h-31z" fill="red" />
      {handles.map(([x, y]) => (
        <rect key={`${x}-${y}`} x={x - 4.5} y={y - 4.5} width="10" height="10" fill="#ff0" stroke="#000" />
      ))}
      <text x="991" y="567" textAnchor="middle" fontSize="31" fill="red">
        吹抜
      </text>
      <text x="657" y="572" fontSize="42" fill="#333" fontFamily="Open Sans">
        DN
      </text>
    </g>
  </svg>
);

const Canvas = () => (
  <main className="flex min-w-0 flex-1 flex-col bg-[#787d80]">
    <div className="flex min-h-0 flex-1">
      <FloorPlan />
      <div className="flex w-[21px] shrink-0 flex-col pt-[26px]">
        <div className="relative flex flex-1 flex-col items-center justify-between bg-[#f0f0f0] py-2">
          <svg width="10" height="7">
            <path d="M1 6l4-4 4 4" fill="none" stroke="#444" strokeWidth="1.800" />
          </svg>
          <div className="absolute top-[442px] h-[21px] w-5 bg-[#cdcdcd]" />
          <svg width="10" height="7">
            <path d="M1 1l4 4 4-4" fill="none" stroke="#444" strokeWidth="1.800" />
          </svg>
        </div>
      </div>
    </div>
    <div className="relative ml-[27px] flex h-5 shrink-0 items-center justify-between bg-[#f0f0f0] pr-7 pl-1.5">
      <svg width="7" height="10">
        <path d="M6 1L2 5l4 4" fill="none" stroke="#444" strokeWidth="1.800" />
      </svg>
      <div className="absolute left-[363px] h-5 w-[21px] bg-[#cdcdcd]" />
      <svg width="7" height="10">
        <path d="M1 1l4 4-4 4" fill="none" stroke="#444" strokeWidth="1.800" />
      </svg>
    </div>
  </main>
);

const PropertyPanel = () => (
  <aside className="w-[256px] shrink-0 border-l-[6px] border-black bg-[#1f2428] text-[15px] leading-5 text-[#f0f0f0]">
    <div className="flex h-[30px] items-center justify-between border-b border-[#5d6367] pr-[9px] pl-2">
      <h2 className="pb-1 text-[13px]">部屋プロパティ</h2>
      <button aria-label="閉じる">
        <svg width="22" height="22">
          <rect x=".5" y=".5" width="21" height="21" fill="#1b1f22" stroke="#d8d8dc" />
          <rect x="16" y="2" width="4" height="18" fill="#f4b818" />
          <path d="M14.500 1v20" stroke="#e4e4e8" />
          <path d="M4 4v14l7-7z" fill="#d8dcee" />
        </svg>
      </button>
    </div>
    <div className="px-1.5 pr-[13px]">
      <h3 className="mt-1.5 text-sm leading-6 text-[#f5bb2e]">種類・サイズ・表示名</h3>
      <div className="mt-0.5 grid grid-cols-[64px_112px_1fr] items-center gap-y-[5px] [&>*:nth-child(3n)]:ml-[5px]">
        <label htmlFor="種類">種類:</label>
        <PropSelect id="種類" value="吹抜" width="w-[112px]" />
        <PropSelect id="畳" value="畳" width="w-12" />
        <label htmlFor="サイズ">サイズ:</label>
        <PropSelect id="サイズ" value="任意" width="w-[112px]" />
        <Check label="表示" />
        <label htmlFor="幅">幅:</label>
        <PropInput id="幅" value="3064.286" width="w-[112px]" />
        <Unit />
        <label htmlFor="奥行">奥行:</label>
        <PropInput id="奥行" value="910" width="w-[112px]" />
        <Unit />
        <span />
        <Check label="内寸" />
        <span />
        <label htmlFor="名称">名称:</label>
        <PropInput id="名称" value="吹抜" width="w-[112px]" left />
        <Check label="表示" checked />
      </div>
      <div className="mt-3 grid grid-cols-2 gap-x-[5px] gap-y-1">
        <button className={PROP_BUTTON}>部屋名移動</button>
        <button className={PROP_BUTTON}>多角形変換</button>
        <Check label="床面積に算入" checked />
        <button className={`${PROP_BUTTON} w-[70px] justify-self-end`}>フォント</button>
        <PropSelect id="数値移動" value="数値移動" width="w-full" />
        <PropSelect id="数値コピー" value="数値コピー" width="w-full" />
      </div>
      <div className="mt-2">
        <GoldLine />
      </div>
      <h3 className="mt-[9px] leading-[23px] text-[#f5bb2e]">色・模様</h3>
      <div className="mt-[3px] flex items-center">
        <label htmlFor="模様" className="w-16">
          模様:
        </label>
        <PropSelect id="模様" value="塗り潰し" width="w-[165px]" />
      </div>
      <div className="mt-1.5 flex items-center">
        <span className="w-16">前景色:</span>
        <button aria-label="前景色" className="flex h-[23px] w-[58px] items-center justify-between border border-[#5d6367] bg-[#15181a] px-0.5">
          <span className="h-[17px] w-8 border-2 border-black bg-[#e8d8bc]" />
          <svg width="15" height="10">
            <path d="M0 0h12L6 10z" fill="#6a6f73" />
          </svg>
        </button>
        <div className="ml-[19px] h-[72px] w-[85px] bg-white px-[7px] py-[7px]">
          <div className="h-full border-2 border-black bg-[#e8d8bc]" />
        </div>
      </div>
      <div className="mt-[11px] flex items-center">
        <label htmlFor="畳敷き" className="w-16">
          畳敷き:
        </label>
        <PropSelect id="畳敷き" value="畳なし" width="w-[165px]" />
      </div>
      <div className="mt-2">
        <GoldLine />
      </div>
      <h3 className="mt-[9px] leading-[23px] text-[#f5bb2e]">立体化設定</h3>
      <div className="mt-[3px] flex flex-col gap-1">
        <div className="flex items-center gap-[5px]">
          <label htmlFor="床高" className="w-[79px]">
            床高:
          </label>
          <PropInput id="床高" value="0" width="w-[112px]" />
          <Unit />
        </div>
        <div className="flex items-center gap-[5px]">
          <label htmlFor="天井高" className="w-[79px]">
            天井高:
          </label>
          <PropInput id="天井高" value="2400" width="w-[112px]" />
          <Unit />
        </div>
        <div className="flex items-center gap-[5px]">
          <div className="w-[108px]">
            <Check label="幅木高:" />
          </div>
          <PropInput id="幅木高" value="60" width="w-[80px]" />
          <Unit />
        </div>
        <div className="flex items-center gap-[5px]">
          <div className="w-[108px]">
            <Check label="廻り縁高:" />
          </div>
          <PropInput id="廻り縁高" value="30" width="w-[80px]" />
          <Unit />
        </div>
      </div>
      <button className="relative mt-1.5 flex h-[73px] w-[225px] items-stretch rounded-sm border border-[#777c80] bg-linear-to-b from-[#f2f2f2] via-[#c2c4c8] to-[#8d919c] text-[13px] leading-4 text-[#333]">
        <span className="flex w-[75px] items-center justify-center border-r border-[#8c9096]">
          <svg width="54" height="52">
            <rect x=".5" y=".5" width="53" height="51" fill="#ebe8e4" stroke="#b9a68c" />
            <path d="M1 40L53 8v34L30 51H1z" fill="#f4f1ed" />
            <rect width="54" height="4" fill="#7a4510" />
            <rect y="47" width="54" height="5" fill="#7a4510" />
          </svg>
        </span>
        <span className="flex flex-col items-center justify-center pb-1 pl-2.5">
          モールディング
          <span>なし</span>
        </span>
        <svg className="absolute right-1.5 bottom-7" width="10" height="6">
          <path d="M0 0h10L5 5z" fill="#777c80" />
        </svg>
      </button>
      <button className={`${PROP_BUTTON} mt-3 w-full`}>詳細設定</button>
    </div>
  </aside>
);

const App = () => {
  return (
    <div
      lang="ja"
      className="flex h-screen min-h-[900px] flex-col overflow-hidden border border-[#6b6b6b] bg-[#1f2428] font-['Noto_Sans_CJK_JP',sans-serif] [font-feature-settings:'palt']"
    >
      <TitleBar />
      <ToolBar />
      <div className="flex min-h-0 flex-1">
        <SideBar />
        <div className="flex min-w-0 flex-1 pt-[5px] pb-[5px]">
          <RoomPanel />
          <Canvas />
        </div>
        <PropertyPanel />
      </div>
    </div>
  );
};

export default App;
